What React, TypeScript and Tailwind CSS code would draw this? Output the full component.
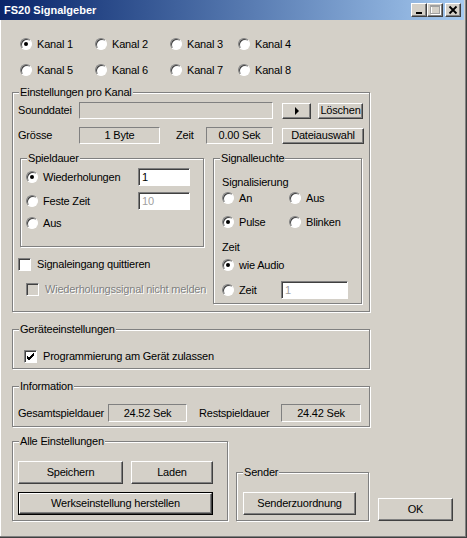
import type { ReactNode } from "react";

// classic win32 dialog pieces
function Group({ title, className, children }: { title: string; className: string; children?: ReactNode }) {
  return (
    <div className={`border border-[#808080] shadow-[inset_1px_1px_0_#fff,1px_1px_0_#fff] ${className}`}>
      <div className="-mt-[7px] ml-[6px] w-fit bg-[#d4d0c8] px-[1px] leading-[13px]">{title}</div>
      {children}
    </div>
  );
}

function Radio({ label, checked, className = "" }: { label: string; checked?: boolean; className?: string }) {
  return (
    <div className={`flex h-[16px] items-center whitespace-nowrap ${className}`}>
      <span className="flex h-[12px] w-[12px] shrink-0 items-center justify-center rounded-full border border-t-[#808080] border-l-[#808080] border-r-white border-b-white bg-white shadow-[inset_1px_1px_0_#404040]">
        {checked && <span className="h-[4px] w-[4px] rounded-full bg-black" />}
      </span>
      <span className="ml-[5px]">{label}</span>
    </div>
  );
}

function Check({ label, checked, disabled, className = "" }: { label: string; checked?: boolean; disabled?: boolean; className?: string }) {
  return (
    <div className={`flex h-[13px] items-center whitespace-nowrap ${className}`}>
      <span
        className={`flex h-[13px] w-[13px] shrink-0 items-center justify-center border border-t-[#808080] border-l-[#808080] border-r-white border-b-white shadow-[inset_1px_1px_0_#404040] ${
          disabled ? "bg-[#d4d0c8]" : "bg-white"
        }`}
      >
        {checked && (
          <svg width="9" height="9" viewBox="0 0 9 9">
            <path d="M1 4 L3 6 L8 1 M1 5 L3 7 L8 2 M1 6 L3 8 L8 3" stroke="#000" strokeWidth="1" fill="none" />
          </svg>
        )}
      </span>
      <span className={`ml-[6px] ${disabled ? "text-[#808080] [text-shadow:1px_1px_0_#fff]" : ""}`}>{label}</span>
    </div>
  );
}

function Btn({ children, className, def }: { children: ReactNode; className: string; def?: boolean }) {
  const face = (
    <div className="flex h-full w-full items-center justify-center whitespace-nowrap border border-t-white border-l-white border-r-[#404040] border-b-[#404040] bg-[#d4d0c8] shadow-[inset_-1px_-1px_0_#808080]">
      {children}
    </div>
  );
  if (def) return <div className={`border border-black ${className}`}>{face}</div>;
  return <div className={className}>{face}</div>;
}

function Field({ children, className }: { children?: ReactNode; className: string }) {
  return (
    <div className={`flex items-center justify-center border border-t-[#808080] border-l-[#808080] border-r-white border-b-white whitespace-nowrap ${className}`}>
      {children}
    </div>
  );
}

function Edit({ value, disabled, className }: { value: string; disabled?: boolean; className: string }) {
  return (
    <div
      className={`flex items-center border border-t-[#808080] border-l-[#808080] border-r-white border-b-white bg-white pl-[3px] shadow-[inset_1px_1px_0_#404040] ${
        disabled ? "text-[#a0a0a0]" : ""
      } ${className}`}
    >
      {value}
    </div>
  );
}

function TitleBar() {
  return (
    <div className="mr-[3px] flex h-[20px] items-center justify-between bg-gradient-to-r from-[#0a246a] to-[#a6caf0] pl-[4px] pr-[3px]">
      <span className="text-[11px] font-bold tracking-normal text-white">FS20 Signalgeber</span>
      <div className="flex items-center">
        <Btn className="h-[14px] w-[16px]">
          <svg width="14" height="12" viewBox="0 0 14 12">
            <rect x="4" y="8" width="6" height="2" fill="#000" />
          </svg>
        </Btn>
        <Btn className="h-[14px] w-[16px]">
          <svg width="14" height="12" viewBox="0 0 14 12">
            <rect x="3.5" y="2.5" width="9" height="8" fill="none" stroke="#fff" />
            <rect x="2.5" y="1.5" width="9" height="8" fill="none" stroke="#a0a0a0" />
            <rect x="2" y="1" width="10" height="2" fill="#a0a0a0" />
          </svg>
        </Btn>
        <Btn className="ml-[2px] h-[14px] w-[16px]">
          <svg width="14" height="12" viewBox="0 0 14 12">
            <path d="M3.5 2.5 L10.5 9.5 M10.5 2.5 L3.5 9.5" stroke="#000" strokeWidth="1.8" />
          </svg>
        </Btn>
      </div>
    </div>
  );
}

export default function App() {
  return (
    <div className="flex h-[538px] w-[467px] flex-col bg-[#d4d0c8] font-['Liberation_Sans',Arial,sans-serif] text-[11px] leading-[13px] tracking-[-0.2px] text-black shadow-[inset_-1px_-1px_0_#404040,inset_-2px_-2px_0_#808080,inset_1px_0_0_#fff]">
      <TitleBar />

      <div className="pl-[12px]">
        {/* Kanal auswahl */}
        <div className="ml-[8px] mt-[16px] flex flex-col gap-[10px]">
          <div className="flex">
            <Radio label="Kanal 1" checked className="w-[75px]" />
            <Radio label="Kanal 2" className="w-[75px]" />
            <Radio label="Kanal 3" className="w-[68px]" />
            <Radio label="Kanal 4" />
          </div>
          <div className="flex">
            <Radio label="Kanal 5" className="w-[75px]" />
            <Radio label="Kanal 6" className="w-[75px]" />
            <Radio label="Kanal 7" className="w-[68px]" />
            <Radio label="Kanal 8" />
          </div>
        </div>

        {/* Einstellungen pro Kanal */}
        <Group title="Einstellungen pro Kanal" className="mt-[14px] h-[220px] w-[358px]">
          <div className="mt-[3px] flex h-[17px] items-center pl-[5px]">
            <span className="w-[61px]">Sounddatei</span>
            <Field className="h-[17px] w-[194px]" />
            <Btn className="ml-[9px] h-[16px] w-[29px]">
              <svg width="6" height="8" viewBox="0 0 6 8">
                <path d="M1 0 L5 4 L1 8 Z" fill="#000" />
              </svg>
            </Btn>
            <Btn className="ml-[7px] h-[16px] w-[45px]">Löschen</Btn>
          </div>

          <div className="mt-[8px] flex h-[17px] items-center pl-[5px]">
            <span className="w-[61px]">Grösse</span>
            <Field className="h-[17px] w-[81px]">1 Byte</Field>
            <span className="ml-[16px] w-[30px]">Zeit</span>
            <Field className="h-[17px] w-[67px]">0.00 Sek</Field>
            <Btn className="ml-[9px] h-[16px] w-[82px]">Dateiauswahl</Btn>
          </div>

          <div className="mt-[14px] flex items-start">
            <div className="w-[191px] shrink-0">
              <Group title="Spieldauer" className="ml-[7px] h-[89px] w-[184px]">
                <div className="mt-[3px] flex h-[18px] items-center pl-[5px]">
                  <Radio label="Wiederholungen" checked className="w-[112px]" />
                  <Edit value="1" className="h-[18px] w-[52px]" />
                </div>
                <div className="mt-[6px] flex h-[18px] items-center pl-[5px]">
                  <Radio label="Feste Zeit" className="w-[112px]" />
                  <Edit value="10" disabled className="h-[18px] w-[52px]" />
                </div>
                <div className="mt-[4px] flex h-[18px] items-center pl-[5px]">
                  <Radio label="Aus" />
                </div>
              </Group>
              <Check label="Signaleingang quittieren" className="ml-[5px] mt-[11px]" />
              <Check label="Wiederholungssignal nicht melden" disabled className="ml-[13px] mt-[12px]" />
            </div>

            <Group title="Signalleuchte" className="ml-[9px] h-[146px] w-[149px]">
              <div className="ml-[8px] mt-[11px]">Signalisierung</div>
              <div className="ml-[8px] mt-[1px] flex">
                <Radio label="An" className="w-[67px]" />
                <Radio label="Aus" />
              </div>
              <div className="ml-[8px] mt-[8px] flex">
                <Radio label="Pulse" checked className="w-[67px]" />
                <Radio label="Blinken" />
              </div>
              <div className="ml-[8px] mt-[11px]">Zeit</div>
              <Radio label="wie Audio" checked className="ml-[8px] mt-[3px]" />
              <div className="ml-[8px] mt-[8px] flex h-[18px] items-center">
                <Radio label="Zeit" className="w-[59px]" />
                <Edit value="1" disabled className="h-[18px] w-[67px]" />
              </div>
            </Group>
          </div>
        </Group>

        {/* Geräteeinstellungen */}
        <Group title="Geräteeinstellungen" className="mt-[17px] h-[40px] w-[358px]">
          <Check label="Programmierung am Gerät zulassen" checked className="ml-[11px] mt-[14px]" />
        </Group>

        {/* Information */}
        <Group title="Information" className="mt-[17px] h-[41px] w-[358px]">
          <div className="mt-[11px] flex h-[18px] items-center pl-[5px]">
            <span className="w-[90px]">Gesamtspieldauer</span>
            <Field className="h-[18px] w-[79px]">24.52 Sek</Field>
            <span className="ml-[12px] w-[82px]">Restspieldauer</span>
            <Field className="h-[18px] w-[80px]">24.42 Sek</Field>
          </div>
        </Group>

        {/* unten */}
        <div className="mt-[14px] flex items-start">
          <Group title="Alle Einstellungen" className="h-[80px] w-[216px] shrink-0">
            <div className="ml-[5px] mt-[13px] flex">
              <Btn className="h-[23px] w-[105px]">Speichern</Btn>
              <Btn className="ml-[8px] h-[23px] w-[82px]">Laden</Btn>
            </div>
            <Btn def className="ml-[5px] mt-[8px] h-[23px] w-[195px]">
              Werkseinstellung herstellen
            </Btn>
          </Group>
          <Group title="Sender" className="ml-[8px] mt-[31px] h-[49px] w-[133px] shrink-0">
            <Btn className="ml-[6px] mt-[13px] h-[23px] w-[113px]">Senderzuordnung</Btn>
          </Group>
          <Btn className="ml-[9px] mt-[57px] h-[23px] w-[75px] shrink-0">OK</Btn>
        </div>
      </div>
    </div>
  );
}
